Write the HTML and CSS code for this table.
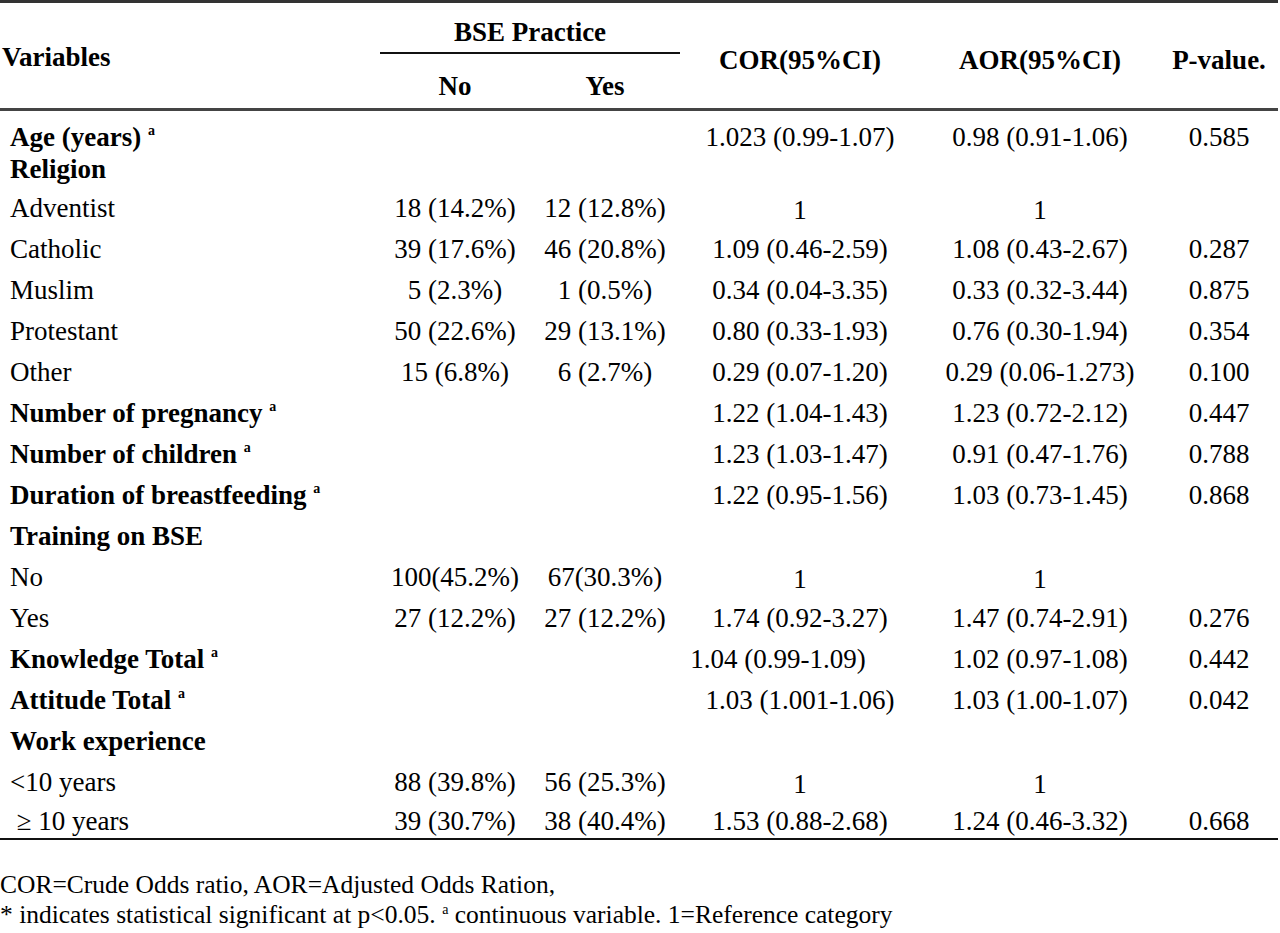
FILE: index.html
```html
<!DOCTYPE html>
<html lang="en">
<head>
    <meta charset="UTF-8">
    <meta name="viewport" content="width=device-width, initial-scale=1.0">
    <title>BSE Practice - Logistic regression</title>
    <link rel="stylesheet" href="styles.css">
</head>
<body>
    <table class="results">
        <colgroup>
            <col class="c-var">
            <col class="c-n">
            <col class="c-n">
            <col class="c-or">
            <col class="c-or">
            <col class="c-p">
        </colgroup>
        <thead>
            <tr class="head-top">
                <th rowspan="2" class="var-head">Variables</th>
                <th colspan="2" class="group">BSE Practice</th>
                <th rowspan="2" class="stat">COR(95%CI)</th>
                <th rowspan="2" class="stat">AOR(95%CI)</th>
                <th rowspan="2" class="stat">P-value.</th>
            </tr>
            <tr class="head-sub">
                <th>No</th>
                <th>Yes</th>
            </tr>
        </thead>
        <tbody>
            <tr class="first tight">
                <td class="label">Age (years) <sup>a</sup></td>
                <td></td><td></td>
                <td>1.023 (0.99-1.07)</td>
                <td>0.98 (0.91-1.06)</td>
                <td>0.585</td>
            </tr>
            <tr class="tight second">
                <td class="label">Religion</td>
                <td></td><td></td><td></td><td></td><td></td>
            </tr>
            <tr>
                <td>Adventist</td>
                <td>18 (14.2%)</td>
                <td>12 (12.8%)</td>
                <td class="ref">1</td>
                <td class="ref">1</td>
                <td></td>
            </tr>
            <tr>
                <td>Catholic</td>
                <td>39 (17.6%)</td>
                <td>46 (20.8%)</td>
                <td>1.09 (0.46-2.59)</td>
                <td>1.08 (0.43-2.67)</td>
                <td>0.287</td>
            </tr>
            <tr>
                <td>Muslim</td>
                <td>5 (2.3%)</td>
                <td>1 (0.5%)</td>
                <td>0.34 (0.04-3.35)</td>
                <td>0.33 (0.32-3.44)</td>
                <td>0.875</td>
            </tr>
            <tr>
                <td>Protestant</td>
                <td>50 (22.6%)</td>
                <td>29 (13.1%)</td>
                <td>0.80 (0.33-1.93)</td>
                <td>0.76 (0.30-1.94)</td>
                <td>0.354</td>
            </tr>
            <tr>
                <td>Other</td>
                <td>15 (6.8%)</td>
                <td>6 (2.7%)</td>
                <td>0.29 (0.07-1.20)</td>
                <td>0.29 (0.06-1.273)</td>
                <td>0.100</td>
            </tr>
            <tr>
                <td class="label">Number of pregnancy <sup>a</sup></td>
                <td></td><td></td>
                <td>1.22 (1.04-1.43)</td>
                <td>1.23 (0.72-2.12)</td>
                <td>0.447</td>
            </tr>
            <tr>
                <td class="label">Number of children <sup>a</sup></td>
                <td></td><td></td>
                <td>1.23 (1.03-1.47)</td>
                <td>0.91 (0.47-1.76)</td>
                <td>0.788</td>
            </tr>
            <tr>
                <td class="label">Duration of breastfeeding <sup>a</sup></td>
                <td></td><td></td>
                <td>1.22 (0.95-1.56)</td>
                <td>1.03 (0.73-1.45)</td>
                <td>0.868</td>
            </tr>
            <tr>
                <td class="label">Training on BSE</td>
                <td></td><td></td><td></td><td></td><td></td>
            </tr>
            <tr>
                <td>No</td>
                <td>100(45.2%)</td>
                <td>67(30.3%)</td>
                <td class="ref">1</td>
                <td class="ref">1</td>
                <td></td>
            </tr>
            <tr>
                <td>Yes</td>
                <td>27 (12.2%)</td>
                <td>27 (12.2%)</td>
                <td>1.74 (0.92-3.27)</td>
                <td>1.47 (0.74-2.91)</td>
                <td>0.276</td>
            </tr>
            <tr>
                <td class="label">Knowledge Total <sup>a</sup></td>
                <td></td><td></td>
                <td class="shift">1.04 (0.99-1.09)</td>
                <td>1.02 (0.97-1.08)</td>
                <td>0.442</td>
            </tr>
            <tr>
                <td class="label">Attitude Total <sup>a</sup></td>
                <td></td><td></td>
                <td>1.03 (1.001-1.06)</td>
                <td>1.03 (1.00-1.07)</td>
                <td>0.042</td>
            </tr>
            <tr>
                <td class="label">Work experience</td>
                <td></td><td></td><td></td><td></td><td></td>
            </tr>
            <tr>
                <td>&lt;10 years</td>
                <td>88 (39.8%)</td>
                <td>56 (25.3%)</td>
                <td class="ref">1</td>
                <td class="ref">1</td>
                <td></td>
            </tr>
            <tr class="last">
                <td>&nbsp;&ge; 10 years</td>
                <td>39 (30.7%)</td>
                <td>38 (40.4%)</td>
                <td>1.53 (0.88-2.68)</td>
                <td>1.24 (0.46-3.32)</td>
                <td>0.668</td>
            </tr>
        </tbody>
    </table>

    <div class="notes">
        <p>COR=Crude Odds ratio, AOR=Adjusted Odds Ration,</p>
        <p>* indicates statistical significant at p&lt;0.05. <sup>a</sup> continuous variable. 1=Reference category</p>
    </div>
</body>
</html>
```

FILE: styles.css
```css
body {
    margin: 0;
    padding: 0;
    background: #fff;
    color: #000;
    font-family: 'Liberation Serif', 'Times New Roman', serif;
}
.results {
    width: 1278px;
    border-collapse: collapse;
    table-layout: fixed;
    border-top: 3px solid #333;
    font-size: 27px;
}
.c-var {
    width: 380px;
}
.c-n {
    width: 150px;
}
.c-or {
    width: 240px;
}
.c-p {
    width: 118px;
}
thead {
    border-bottom: 3px solid #444;
}
th {
    font-weight: bold;
    font-size: 27px;
    text-align: center;
    padding: 0;
}
.head-top th {
    vertical-align: middle;
}
.head-top th.var-head {
    text-align: left;
    padding-left: 2px;
    padding-top: 4px;
}
.head-top th.stat {
    padding-top: 10px;
}
.head-top th.group {
    height: 49px;
    border-bottom: 2px solid #111;
    vertical-align: bottom;
    line-height: 40px;
}
.head-sub th {
    height: 43px;
    vertical-align: middle;
    padding-top: 11px;
}
td {
    padding: 0;
    line-height: 41px;
    text-align: center;
    white-space: nowrap;
}
td:first-child {
    text-align: left;
    padding-left: 10px;
}
.label {
    font-weight: bold;
}
sup {
    font-size: 14px;
    font-weight: bold;
    vertical-align: 11px;
    line-height: 0;
}
.tight td {
    line-height: 32px;
}
.first td {
    padding-top: 10px;
}
.second td {
    padding-bottom: 3px;
}
td.ref {
    padding-top: 3px;
    line-height: 38px;
}
.shift {
    padding-right: 44px;
}
.last td {
    line-height: 33px;
    padding-top: 2px;
    border-bottom: 2px solid #111;
}
.notes {
    margin-top: 30px;
    font-size: 25.5px;
}
.notes p {
    margin: 0;
    line-height: 30px;
}
.notes sup {
    font-size: 14px;
    font-weight: normal;
    vertical-align: 9px;
}
```
